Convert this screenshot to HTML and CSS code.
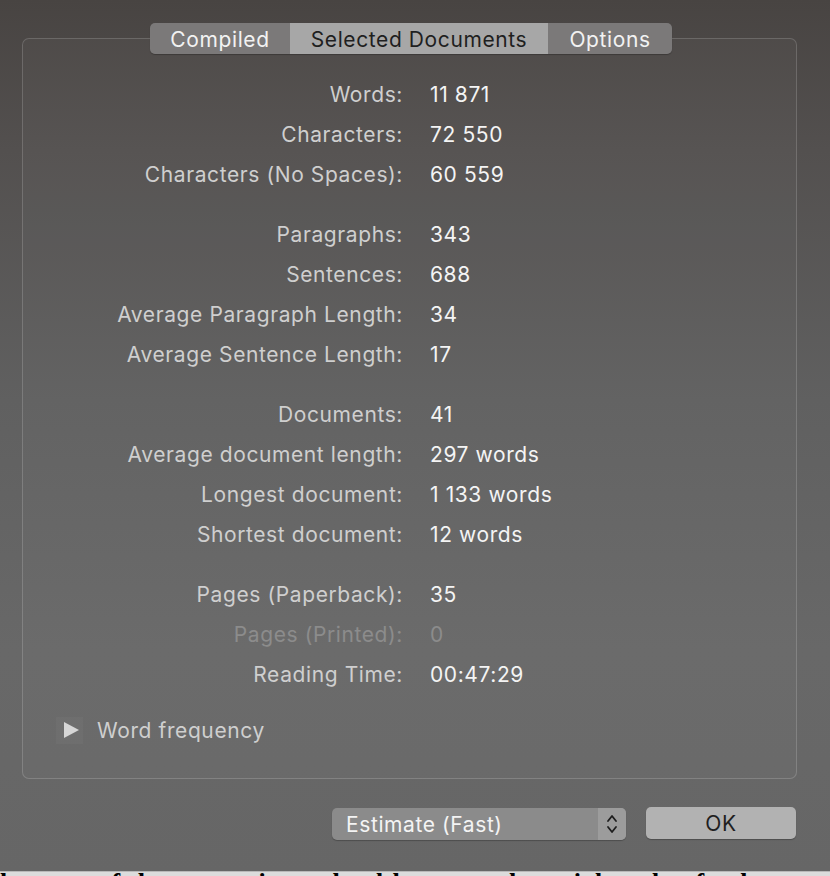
FILE: index.html
```html
<!DOCTYPE html>
<html lang="en">
<head>
    <meta charset="UTF-8">
    <title>Statistics</title>
    <link rel="stylesheet" href="styles.css">
</head>
<body>

<div class="sheet">
    <div class="tabs">
        <div class="tab tab-compiled">Compiled</div>
        <div class="tab tab-selected">Selected Documents</div>
        <div class="tab tab-options">Options</div>
    </div>

    <div class="panel">
        <div class="stats">
            <span class="label">Words:</span><span class="value">11 871</span>
            <span class="label">Characters:</span><span class="value">72 550</span>
            <span class="label">Characters (No Spaces):</span><span class="value">60 559</span>
        </div>
        <div class="stats">
            <span class="label">Paragraphs:</span><span class="value">343</span>
            <span class="label">Sentences:</span><span class="value">688</span>
            <span class="label">Average Paragraph Length:</span><span class="value">34</span>
            <span class="label">Average Sentence Length:</span><span class="value">17</span>
        </div>
        <div class="stats">
            <span class="label">Documents:</span><span class="value">41</span>
            <span class="label">Average document length:</span><span class="value">297 words</span>
            <span class="label">Longest document:</span><span class="value">1 133 words</span>
            <span class="label">Shortest document:</span><span class="value">12 words</span>
        </div>
        <div class="stats">
            <span class="label">Pages (Paperback):</span><span class="value">35</span>
            <span class="label disabled">Pages (Printed):</span><span class="value disabled">0</span>
            <span class="label">Reading Time:</span><span class="value">00:47:29</span>
        </div>

        <div class="disclosure">
            <span class="disclosure-btn"><span class="triangle"></span></span>
            <span>Word frequency</span>
        </div>
    </div>

    <div class="buttons">
        <div class="popup">
            <span class="popup-text">Estimate (Fast)</span>
            <span class="popup-arrows">
                <svg width="12" height="22" viewBox="0 0 12 22">
                    <path d="M2 8 L6 3 L10 8 M2 14 L6 19 L10 14" fill="none" stroke="#1e1e1e" stroke-width="1.8" stroke-linecap="round" stroke-linejoin="round"/>
                </svg>
            </span>
        </div>
        <div class="ok-btn">OK</div>
    </div>
</div>

<div class="behind">
    <p>ltro no of dot or cosi tox dot ldwotenmdecocisle tolt of tolw</p>
</div>

</body>
</html>
```

FILE: styles.css
```css
html, body { margin: 0; padding: 0; }
body {
    width: 830px; height: 876px; overflow: hidden;
    font-family: Inter, "Noto Sans", sans-serif;
    font-size: 21px; letter-spacing: 0.6px;
    background: linear-gradient(#484442 0px, #53504f 150px, #606060 400px, #686868 650px, #666666 876px);
}

.sheet { height: 871px; padding-top: 23px; box-sizing: border-box; }

/* segmented control */
.tabs {
    position: relative; z-index: 2;
    display: flex; margin-left: 150px; width: 522px; height: 31px;
    border-radius: 5px; overflow: hidden;
    box-shadow: 0 1px 1px rgba(0,0,0,0.25);
    line-height: 34px;
}
.tab { text-align: center; color: #f2f2f2; background: #7b7979; }
.tab-compiled { width: 140px; }
.tab-selected { width: 258px; background: #a7a7a7; color: #1f1f1f; }
.tab-options { width: 124px; }

.panel {
    margin: -16px 33px 0 22px; height: 741px; box-sizing: border-box;
    border: 1px solid rgba(255,255,255,0.16); border-radius: 7px;
    background: rgba(255,255,255,0.025);
    padding-top: 36px;
}

.stats {
    display: grid; grid-template-columns: 380px auto; column-gap: 27px;
    margin-bottom: 20px;
    line-height: 40px;
}
.label { text-align: right; color: #cfcfcf; }
.value { color: #f4f4f4; }
.label.disabled, .value.disabled { color: #8c8c8c; }

.disclosure {
    display: flex; align-items: center; margin-top: -5px;
    padding-left: 33px; height: 40px;
    color: #cfcfcf;
}
.disclosure-btn {
    width: 27px; height: 27px; margin-right: 14px;
    display: flex; align-items: center; justify-content: center;
    background: rgba(255,255,255,0.03);
}
.triangle {
    width: 0; height: 0; margin-left: 3px;
    border-top: 8.5px solid transparent; border-bottom: 8.5px solid transparent;
    border-left: 15px solid #d6d6d6;
}

/* bottom buttons */
.buttons { display: flex; align-items: flex-start; margin: 28px 0 0 332px; gap: 20px; }
.popup {
    display: flex; width: 294px; height: 32px; margin-top: 1px;
    border-radius: 5px; overflow: hidden;
    background: #8b8b8b; box-shadow: 0 1px 1px rgba(0,0,0,0.25);
    line-height: 34px; color: #f4f4f4;
}
.popup-text { flex: 1; padding-left: 14px; }
.popup-arrows {
    width: 28px; display: flex; align-items: center; justify-content: center;
    background: #9c9c9c;
}
.ok-btn {
    width: 150px; height: 32px; border-radius: 5px;
    background: #b2b2b2; box-shadow: 0 1px 1px rgba(0,0,0,0.25);
    text-align: center; line-height: 34px; color: #1f1f1f;
}

/* window behind the sheet */
.behind {
    height: 5px; overflow: hidden;
    border-top: 1px solid #b8b8b8; background: #dcdcdc;
}
.behind p {
    margin: 0; white-space: nowrap;
    font-family: "Liberation Serif", serif; font-weight: bold;
    font-size: 26px; line-height: 22px; letter-spacing: 2px;
    color: #000;
}
```
